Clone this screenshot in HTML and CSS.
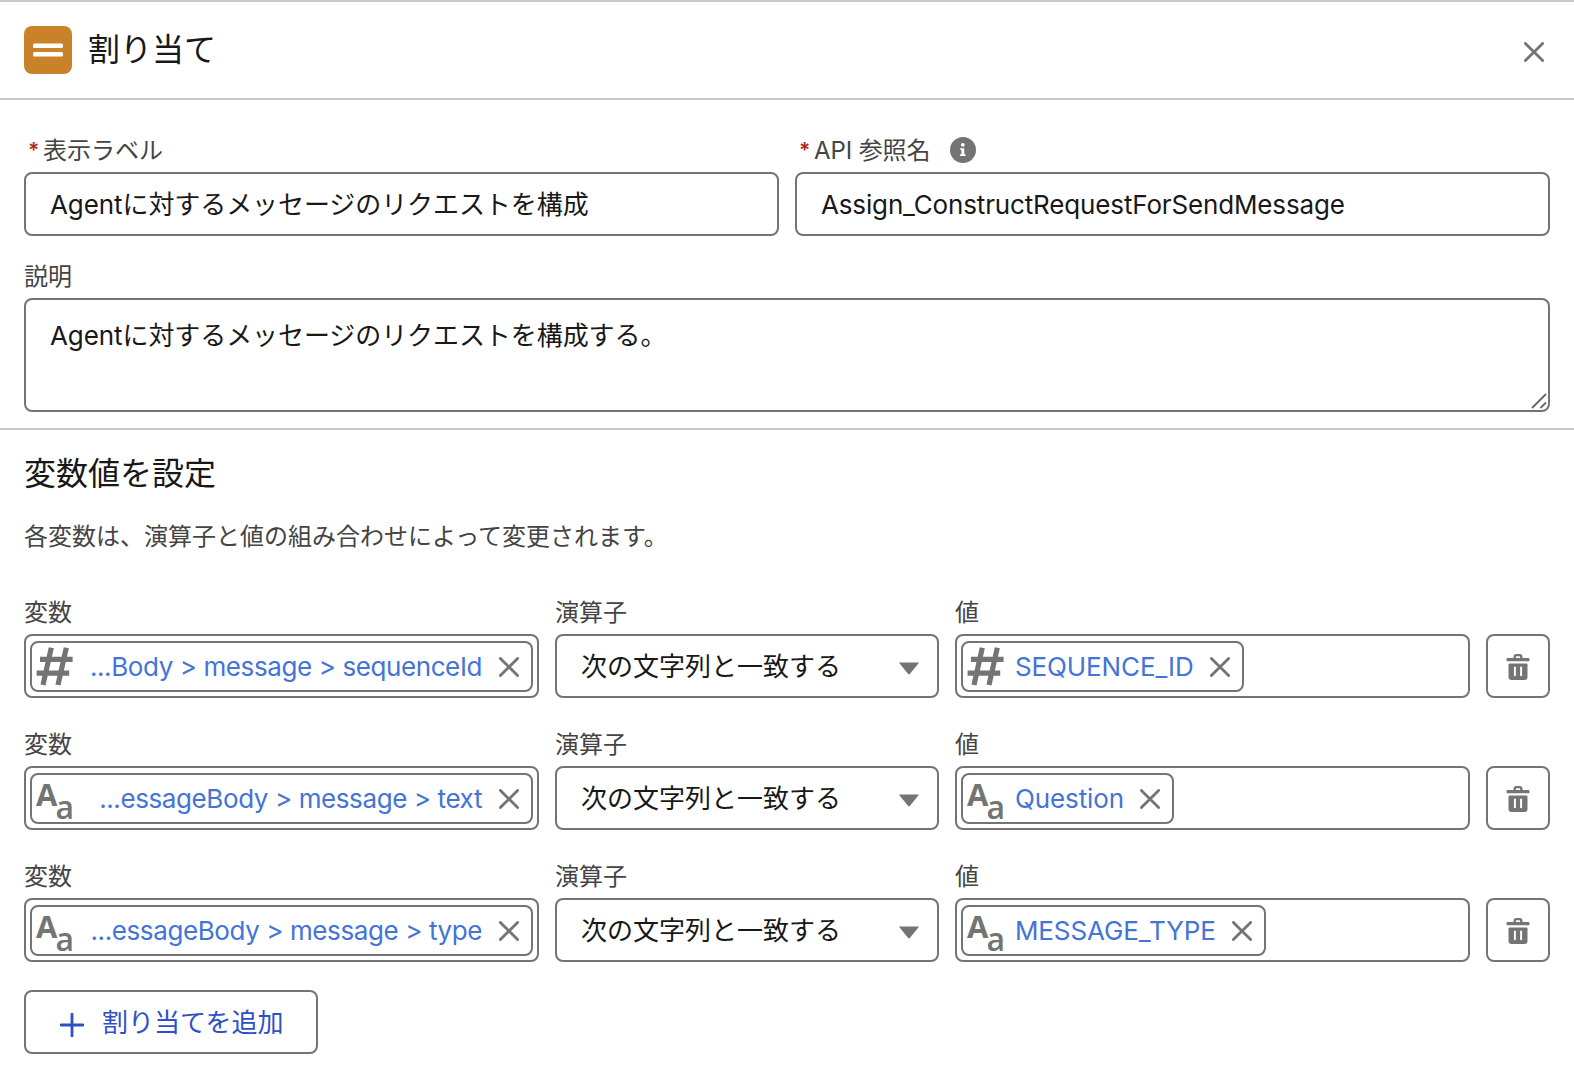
FILE: index.html
```html
<!DOCTYPE html>
<html lang="ja">
<head>
    <meta charset="UTF-8">
    <meta name="viewport" content="width=device-width, initial-scale=1.0">
    <title>割り当て</title>
    <link rel="stylesheet" href="styles.css">
</head>
<body>
    <svg class="sprite" aria-hidden="true">
        <symbol id="icon-close" viewBox="0 0 20 20">
            <path d="M1.4 1.4L18.6 18.6M18.6 1.4L1.4 18.6" fill="none" stroke="currentColor" stroke-width="2.8" stroke-linecap="round"/>
        </symbol>
        <symbol id="icon-number" viewBox="0 0 38 39">
            <path d="M15.3 0.8L7 38M30.3 0.8L22 38M4 12.4H36.6M0.6 26.2H33.2" fill="none" stroke="currentColor" stroke-width="5.2"/>
        </symbol>
        <symbol id="icon-trash" viewBox="0 0 24 28">
            <path d="M8.7 6V3.8Q8.7 2.1 10.4 2.1H13.6Q15.3 2.1 15.3 3.8V6" fill="none" stroke="currentColor" stroke-width="2.4"/>
            <rect x="0.5" y="5" width="23" height="3.2" rx="1" fill="currentColor"/>
            <path fill-rule="evenodd" fill="currentColor" d="M3.6 10.4H20.4Q21.5 10.4 21.5 11.5V24Q21.5 27 18.5 27H5.5Q2.5 27 2.5 24V11.5Q2.5 10.4 3.6 10.4ZM8.9 13.6Q7.9 13.6 7.9 14.6V22.2Q7.9 23.2 8.9 23.2Q9.9 23.2 9.9 22.2V14.6Q9.9 13.6 8.9 13.6ZM15.1 13.6Q14.1 13.6 14.1 14.6V22.2Q14.1 23.2 15.1 23.2Q16.1 23.2 16.1 22.2V14.6Q16.1 13.6 15.1 13.6Z"/>
        </symbol>
        <symbol id="icon-down" viewBox="0 0 20 13">
            <path d="M0.6 0.5H19.4Q20.2 0.5 19.6 1.2L10.8 12Q10 12.8 9.2 12L0.4 1.2Q-0.2 0.5 0.6 0.5Z" fill="currentColor"/>
        </symbol>
    </svg>

    <header class="header">
        <svg class="header-icon" viewBox="0 0 48 48">
            <rect width="48" height="48" rx="8" fill="#ca8228"/>
            <rect x="9" y="17.5" width="30" height="4.5" rx="1.6" fill="#fff"/>
            <rect x="9" y="26" width="30" height="4.5" rx="1.6" fill="#fff"/>
        </svg>
        <h1>割り当て</h1>
        <button class="close-btn"><svg class="icon-x"><use href="#icon-close"/></svg></button>
    </header>

    <section class="details">
        <div class="detail-row">
            <div class="field">
                <label class="label" for="display-label"><span class="required">*</span>表示ラベル</label>
                <input class="input label-input" type="text" id="display-label" value="Agentに対するメッセージのリクエストを構成">
            </div>
            <div class="field">
                <label class="label" for="api-name"><span class="required">*</span><span class="api-label">API 参照名</span>
                    <svg class="info" viewBox="0 0 26 26">
                        <circle cx="13" cy="13" r="13" fill="#747474"/>
                        <circle cx="12.8" cy="7.8" r="1.9" fill="#fff"/>
                        <path d="M10.3 11.3H14.3V17.2H15.6V19H10.1V17.2H11.4V13.1H10.3Z" fill="#fff"/>
                    </svg>
                </label>
                <input class="input api-input" type="text" id="api-name" value="Assign_ConstructRequestForSendMessage">
            </div>
        </div>
        <div class="field field-description">
            <label class="label" for="description">説明</label>
            <div class="textarea-wrap">
                <textarea class="input textarea" id="description">Agentに対するメッセージのリクエストを構成する。</textarea>
                <svg class="grip" viewBox="0 0 16 16"><path d="M1 15L15 1M9.5 15L15 9.5" fill="none" stroke="#666" stroke-width="1.8"/></svg>
            </div>
        </div>
    </section>

    <section class="assignments">
        <h2>変数値を設定</h2>
        <p class="help">各変数は、演算子と値の組み合わせによって変更されます。</p>

        <div class="assignment">
            <div class="field">
                <span class="label">変数</span>
                <div class="box">
                    <div class="pill pill-full">
                        <svg class="type-icon"><use href="#icon-number"/></svg>
                        <span class="pill-text">...Body &gt; message &gt; sequenceId</span>
                        <svg class="icon-x"><use href="#icon-close"/></svg>
                    </div>
                </div>
            </div>
            <div class="field">
                <span class="label">演算子</span>
                <div class="box select"><span>次の文字列と一致する</span><svg class="down"><use href="#icon-down"/></svg></div>
            </div>
            <div class="field">
                <span class="label">値</span>
                <div class="box">
                    <div class="pill">
                        <svg class="type-icon"><use href="#icon-number"/></svg>
                        <span class="pill-text">SEQUENCE_ID</span>
                        <svg class="icon-x"><use href="#icon-close"/></svg>
                    </div>
                </div>
            </div>
            <button class="delete-btn"><svg class="trash"><use href="#icon-trash"/></svg></button>
        </div>

        <div class="assignment">
            <div class="field">
                <span class="label">変数</span>
                <div class="box">
                    <div class="pill pill-full">
                        <span class="type-text"><b>A</b><i>a</i></span>
                        <span class="pill-text">...essageBody &gt; message &gt; text</span>
                        <svg class="icon-x"><use href="#icon-close"/></svg>
                    </div>
                </div>
            </div>
            <div class="field">
                <span class="label">演算子</span>
                <div class="box select"><span>次の文字列と一致する</span><svg class="down"><use href="#icon-down"/></svg></div>
            </div>
            <div class="field">
                <span class="label">値</span>
                <div class="box">
                    <div class="pill">
                        <span class="type-text"><b>A</b><i>a</i></span>
                        <span class="pill-text">Question</span>
                        <svg class="icon-x"><use href="#icon-close"/></svg>
                    </div>
                </div>
            </div>
            <button class="delete-btn"><svg class="trash"><use href="#icon-trash"/></svg></button>
        </div>

        <div class="assignment">
            <div class="field">
                <span class="label">変数</span>
                <div class="box">
                    <div class="pill pill-full">
                        <span class="type-text"><b>A</b><i>a</i></span>
                        <span class="pill-text">...essageBody &gt; message &gt; type</span>
                        <svg class="icon-x"><use href="#icon-close"/></svg>
                    </div>
                </div>
            </div>
            <div class="field">
                <span class="label">演算子</span>
                <div class="box select"><span>次の文字列と一致する</span><svg class="down"><use href="#icon-down"/></svg></div>
            </div>
            <div class="field">
                <span class="label">値</span>
                <div class="box">
                    <div class="pill">
                        <span class="type-text"><b>A</b><i>a</i></span>
                        <span class="pill-text">MESSAGE_TYPE</span>
                        <svg class="icon-x"><use href="#icon-close"/></svg>
                    </div>
                </div>
            </div>
            <button class="delete-btn"><svg class="trash"><use href="#icon-trash"/></svg></button>
        </div>

        <button class="add-btn">
            <svg class="plus" viewBox="0 0 24 24"><path d="M12 1V23M1 12H23" fill="none" stroke="currentColor" stroke-width="2.8" stroke-linecap="round"/></svg>
            <span>割り当てを追加</span>
        </button>
    </section>
</body>
</html>
```
FILE: styles.css
```css
:root {
    --text: #181818;
    --label: #444444;
    --border: #747474;
    --line: #c9c9c9;
    --link: #4374d6;
    --brand: #2f4fca;
    --required: #b0281c;
}

* {
    box-sizing: border-box;
}

body {
    margin: 0;
    height: 1082px;
    border-top: 2px solid var(--line);
    background-color: #fff;
    color: var(--text);
    font-family: Inter, "Noto Sans CJK JP", sans-serif;
    font-size: 26px;
    overflow: hidden;
}

button, input, textarea {
    font: inherit;
    color: inherit;
}

button {
    padding: 0;
    background-color: #fff;
    cursor: pointer;
}

h1, h2 {
    margin: 0;
    font-size: 32px;
    font-weight: 400;
    line-height: 48px;
}

.sprite {
    display: none;
}

.header {
    display: flex;
    align-items: center;
    height: 98px;
    padding: 0 30px 0 24px;
    border-bottom: 2px solid var(--line);
}

.header-icon {
    width: 48px;
    height: 48px;
    margin-right: 16px;
}

.close-btn {
    display: flex;
    margin-left: auto;
    margin-top: 4px;
    border: none;
}

.icon-x {
    flex: none;
    width: 20px;
    height: 20px;
    color: var(--border);
}

.details {
    height: 330px;
    padding: 35px 24px 0;
    border-bottom: 2px solid var(--line);
}

.detail-row {
    display: flex;
    gap: 16px;
}

.detail-row .field {
    flex: 1;
}

.label {
    display: flex;
    align-items: center;
    height: 32px;
    margin-bottom: 5px;
    color: var(--label);
    font-size: 24px;
    line-height: 32px;
}

.required {
    width: 19px;
    padding-left: 4px;
    color: var(--required);
    font-size: 21px;
    font-weight: 600;
}

.api-label {
    letter-spacing: -0.1px;
}

.info {
    width: 26px;
    height: 26px;
    margin: -2px 0 0 20px;
}

.input {
    display: block;
    width: 100%;
    height: 64px;
    padding: 0 24px;
    border: 2px solid var(--border);
    border-radius: 8px;
    background-color: #fff;
    letter-spacing: -0.08px;
    outline: none;
}

.label-input {
    padding-bottom: 4px;
}

.api-input {
    letter-spacing: -0.15px;
}

.field-description {
    margin-top: 25px;
}

.textarea-wrap {
    position: relative;
}

.textarea {
    height: 114px;
    padding: 16px 24px;
    line-height: 39px;
    resize: none;
}

.grip {
    position: absolute;
    right: 3px;
    bottom: 3px;
    width: 16px;
    height: 16px;
}

.assignments {
    padding: 20px 24px 0;
}

.help {
    margin: 21px 0 41px;
    color: var(--label);
    font-size: 24px;
    line-height: 36px;
}

.assignment {
    display: grid;
    grid-template-columns: 515px 384px 515px 64px;
    gap: 16px;
    align-items: end;
    height: 102px;
    margin-bottom: 30px;
}

.box {
    display: flex;
    align-items: center;
    height: 64px;
    padding: 0 4px;
    border: 2px solid var(--border);
    border-radius: 8px;
}

.select {
    justify-content: space-between;
    padding: 0 18px 4px 24px;
}

.down {
    width: 20px;
    height: 13px;
    margin-top: 8px;
    color: var(--border);
}

.pill {
    display: flex;
    align-items: center;
    height: 51px;
    margin-top: 1px;
    padding: 0 12px 0 4px;
    border: 2px solid var(--border);
    border-radius: 8px;
}

.type-icon {
    flex: none;
    width: 38px;
    height: 39px;
    color: var(--border);
}

.type-text {
    display: flex;
    flex: none;
    width: 38px;
    height: 39px;
    color: var(--border);
    font-family: "Open Sans", sans-serif;
    line-height: 30px;
}

.type-text b {
    font-size: 31px;
    font-weight: 700;
    letter-spacing: -1px;
}

.type-text i {
    margin-top: 13px;
    margin-left: -1px;
    font-size: 32px;
    font-style: normal;
    font-weight: 600;
}

.pill-text {
    margin: 0 16px 0 10px;
    color: var(--link);
    letter-spacing: -0.12px;
    white-space: nowrap;
}

.pill-full {
    width: 100%;
}

.pill-full .pill-text {
    margin-left: auto;
    margin-right: 17px;
    letter-spacing: -0.4px;
}

.delete-btn {
    display: flex;
    align-items: center;
    justify-content: center;
    height: 64px;
    padding-top: 1px;
    border: 2px solid var(--border);
    border-radius: 8px;
    color: var(--border);
}

.trash {
    width: 24px;
    height: 28px;
}

.add-btn {
    display: flex;
    align-items: center;
    width: 294px;
    height: 64px;
    margin-top: -2px;
    padding: 0 0 4px 34px;
    border: 2px solid var(--border);
    border-radius: 8px;
    color: var(--brand);
}

.plus {
    width: 24px;
    height: 24px;
    margin: 9px 18px 0 0;
}
```
